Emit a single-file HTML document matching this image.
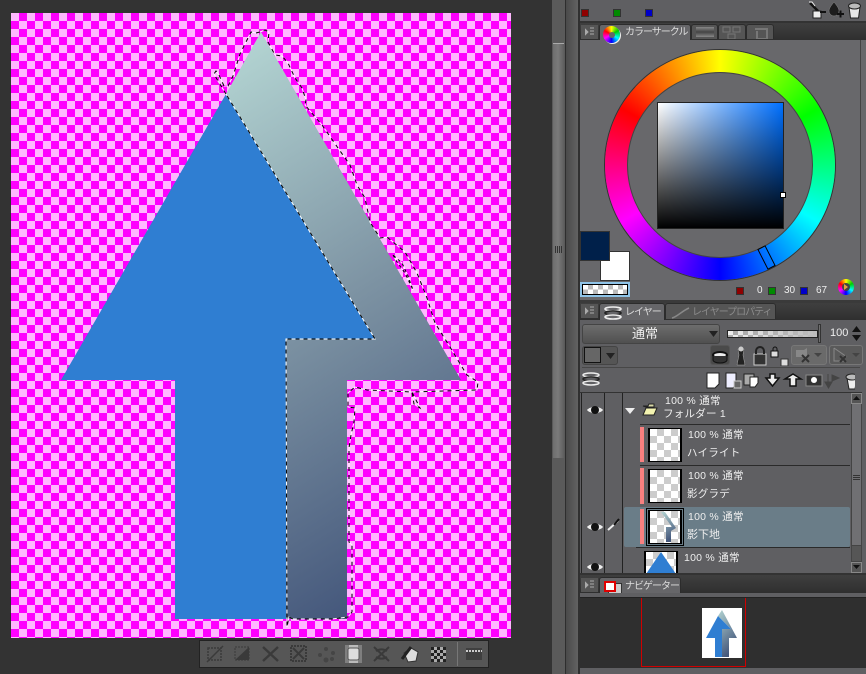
<!DOCTYPE html>
<html><head><meta charset="utf-8"><style>
*{box-sizing:border-box}
html,body{margin:0;padding:0;width:866px;height:674px;overflow:hidden;background:#333}
body{position:relative;font-family:"Liberation Sans","Noto Sans CJK JP",sans-serif;color:#eee}
.a{position:absolute}
.t{position:absolute;font-size:11px;line-height:13px;white-space:nowrap;color:#eee}
.l{font-size:10.500px;letter-spacing:.25px}
.h{font-size:10px;letter-spacing:-1px;color:#ddd}
.tab{position:absolute;background:#666669;border:1px solid #2c2c2c;border-bottom:0;border-radius:3px 3px 0 0}
.thumb{position:absolute;border:1px solid #000;background-color:#fff;background-image:conic-gradient(#ccc 25%,#fff 0 50%,#ccc 0 75%,#fff 0);background-size:14px 14px}
</style></head><body>

<!-- canvas -->
<div class="a" style="left:11px;top:13px;width:500px;height:625px;background-color:#ff00ff;background-image:conic-gradient(#ffb8ff 25%,#ff00ff 0 50%,#ffb8ff 0 75%,#ff00ff 0);background-size:16px 16px;background-position:8px 0"></div>

<svg class="a" style="left:0;top:0" width="552" height="674">
<defs><linearGradient id="g" gradientUnits="userSpaceOnUse" x1="261" y1="32" x2="544" y2="494">
<stop offset="0" stop-color="#b3d4d2"/><stop offset=".5" stop-color="#7d93a3"/><stop offset="1" stop-color="#45587c"/></linearGradient></defs>
<polygon points="261,32 226,94 375,339 286,339 286,619 347,619 347,380 461,380" fill="url(#g)"/>
<polygon points="226,94 61,380 175,380 175,619 286,619 286,339 375,339" fill="#2f7ed2"/>
<g fill="none" stroke-width="1">
<path stroke="#fff" d="M226,94 L218,81 L214,74 L216,71 L219,75 L224,86 L228,86 L233,76 L240,54 L246,42 L251,32 L256,33 L260,32 L265,30 L269,32 L268,42 L275,55 L282,56 L288,63 L295,78 L302,88 L306,100 L305,105 L322,125 L338,148 L350,165 L357,185 L365,198 L370,222 L380,238 L387,237 L405,252 L417,273 L427,298 L435,323 L450,347 L462,367 L467,375 L478,382 L477,390 L412,392 L420,408 L414,404 L412,392 L367,390 L355,387 L348,393 L348,407 L355,408 L354,422 L351,435 L349,448 L349,542 L352,545 L352,612 L348,617 L332,619 L293,619 L289,617 L287,627 L286,339 L375,339 Z"/>
<path stroke="#000" stroke-dasharray="4 4" d="M226,94 L218,81 L214,74 L216,71 L219,75 L224,86 L228,86 L233,76 L240,54 L246,42 L251,32 L256,33 L260,32 L265,30 L269,32 L268,42 L275,55 L282,56 L288,63 L295,78 L302,88 L306,100 L305,105 L322,125 L338,148 L350,165 L357,185 L365,198 L370,222 L380,238 L387,237 L405,252 L417,273 L427,298 L435,323 L450,347 L462,367 L467,375 L478,382 L477,390 L412,392 L420,408 L414,404 L412,392 L367,390 L355,387 L348,393 L348,407 L355,408 L354,422 L351,435 L349,448 L349,542 L352,545 L352,612 L348,617 L332,619 L293,619 L289,617 L287,627 L286,339 L375,339 Z"/>
<path stroke="#fff" d="M393,255 L397,262 L405,273 L413,290 L408,276 L402,263 Z"/>
<path stroke="#000" stroke-dasharray="3 3" d="M393,255 L397,262 L405,273 L413,290 L408,276 L402,263 Z"/>
</g>
</svg>

<!-- canvas toolbar -->
<div class="a" style="left:199px;top:640px;width:290px;height:28px;background:#565656;border:1px solid #222"></div>
<svg class="a" style="left:199px;top:640px" width="290" height="28">
<rect x="146" y="5" width="17" height="18" fill="#7f7f7f"/>
<rect x="150" y="5" width="9" height="18" fill="#bbb"/>
<rect x="149" y="8" width="11" height="12" rx="2" fill="#ddd" stroke="#555"/>
<g fill="none" stroke="#3a3a3a" stroke-width="1.500">
<rect x="9" y="8" width="13" height="12" stroke-dasharray="2 1"/><path d="M8,22 L24,6"/>
<rect x="36" y="7" width="14" height="13" stroke-dasharray="2 1" stroke-width="1"/>
<path d="M64,7 L79,21 M79,7 L64,21" stroke-width="2.400"/>
<rect x="92" y="6" width="15" height="15" stroke-width="2" stroke-dasharray="2 1"/><path d="M94,8 L105,19 M105,8 L94,19" stroke-width="2"/>
<path d="M175,7 L190,21 M190,7 L175,21 M177,11 a10,10 0 0 1 11,0 M177,17 a10,10 0 0 0 11,0" stroke-width="2"/>
</g>
<polygon points="36,20 50,7 50,20" fill="#3a3a3a"/>
<g fill="#454545"><circle cx="121" cy="15" r="2"/><circle cx="127" cy="9" r="2"/><circle cx="134" cy="13" r="2"/><circle cx="127" cy="20" r="2.500"/><circle cx="133" cy="19" r="2"/></g>
<path d="M205,13 l7,-5 l7,4 l-2,9 l-8,1 z" fill="#ddd" stroke="#333"/><path d="M203,19 l9,-12" stroke="#222" stroke-width="3"/>
<rect x="232" y="7" width="15" height="15" fill="#aaa"/>
<g fill="#222"><rect x="232" y="7" width="3" height="3"/><rect x="238" y="7" width="3" height="3"/><rect x="244" y="7" width="3" height="3"/><rect x="235" y="10" width="3" height="3"/><rect x="241" y="10" width="3" height="3"/><rect x="232" y="13" width="3" height="3"/><rect x="238" y="13" width="3" height="3"/><rect x="244" y="13" width="3" height="3"/><rect x="235" y="16" width="3" height="3"/><rect x="241" y="16" width="3" height="3"/><rect x="232" y="19" width="3" height="3"/><rect x="238" y="19" width="3" height="3"/><rect x="244" y="19" width="3" height="3"/></g>
<rect x="258" y="2" width="1" height="24" fill="#777"/>
<rect x="267" y="8" width="16" height="12" fill="#3f3f3f"/><path d="M267,11 h16" stroke="#ccc" stroke-width="2" stroke-dasharray="2 1"/>
</svg>

<!-- splitter and right panel -->
<div class="a" style="left:552px;top:0;width:314px;height:674px;background:#5f5f62"></div>
<div class="a" style="left:552px;top:0;width:13px;height:674px;background:#5a5a5a"></div>
<div class="a" style="left:565px;top:0;width:1px;height:674px;background:#2e2e2e"></div>
<div class="a" style="left:566px;top:0;width:12px;height:674px;background:linear-gradient(90deg,#4a4a4a,#626262)"></div>
<div class="a" style="left:578px;top:0;width:2px;height:674px;background:#303030"></div>
<div class="a" style="left:553px;top:43px;width:11px;height:415px;background:linear-gradient(90deg,#6e6e6e,#7a7a7a 45%,#5e5e5e);border-top:1px solid #aaa"></div>
<div class="a" style="left:555px;top:246px;width:7px;height:7px;background:repeating-linear-gradient(90deg,#333 0 1px,transparent 1px 2px)"></div>

<div class="a" style="left:581px;top:9px;width:8px;height:8px;background:#8f0000;border:1px solid #333"></div>
<div class="a" style="left:613px;top:9px;width:8px;height:8px;background:#008a00;border:1px solid #333"></div>
<div class="a" style="left:645px;top:9px;width:8px;height:8px;background:#0000c8;border:1px solid #333"></div>
<svg class="a" style="left:805px;top:0" width="61" height="20">
<path d="M5,3 L13,11" stroke="#111" stroke-width="2.500"/><path d="M4,2 l3,0 l3,4" stroke="#eee" fill="none"/>
<rect x="8" y="11" width="8" height="7" fill="#eee" stroke="#222"/><rect x="15" y="11" width="6" height="2" fill="#111"/>
<path d="M29,2 c-4,5 -5,7 -5,9 a5,5 0 0 0 10,0 c0,-2 -1,-4 -5,-9z" fill="#1c1c1c" stroke="#888" stroke-width=".5"/><path d="M32,14 h7 M35.500,10.500 v7" stroke="#111" stroke-width="2"/>
<path d="M44,7 l1.500,11 h8 l1.500,-11z" fill="#e8e8e8" stroke="#222"/><ellipse cx="49.500" cy="6" rx="6" ry="3" fill="#bbb" stroke="#222"/>
</svg>

<!-- color panel -->
<div class="a" style="left:580px;top:21px;width:286px;height:2px;background:#333"></div>
<div class="a" style="left:580px;top:23px;width:286px;height:17px;background:linear-gradient(#3f3f3f,#2f2f2f)"></div>
<div class="a" style="left:581px;top:25px;width:17px;height:14px;background:#555"></div>
<svg class="a" style="left:585px;top:27px" width="10" height="10"><path d="M0,2 L3,5 L0,8Z M5,1 h4 M5,4 h4 M5,7 h4" fill="#aaa" stroke="#aaa"/></svg>
<div class="tab" style="left:599px;top:24px;width:92px;height:16px"></div>
<div class="tab" style="left:691px;top:24px;width:27px;height:15px;background:#555"></div>
<div class="tab" style="left:718px;top:24px;width:28px;height:15px;background:#555"></div>
<div class="tab" style="left:746px;top:24px;width:28px;height:15px;background:#555"></div>
<div class="a" style="left:580px;top:40px;width:286px;height:260px;background:#68686b"></div>
<div class="a" style="left:603px;top:26px;width:17px;height:17px;border-radius:50%;background:conic-gradient(#ff0,#0c0 60deg,#0ff 120deg,#00f 180deg,#f0f 240deg,#f00 300deg,#ff0);box-shadow:1px 1px 0 #eee"></div>
<div class="a" style="left:609px;top:32px;width:6px;height:6px;border-radius:50%;background:#666"></div>
<div class="t h" style="left:625px;top:26px">カラーサークル</div>
<div class="a" style="left:696px;top:27px;width:18px;height:10px;background:linear-gradient(#888,#444 50%,#888)"></div>
<svg class="a" style="left:722px;top:26px" width="50" height="13" fill="none" stroke="#777"><rect x="1" y="1" width="7" height="5"/><rect x="11" y="1" width="7" height="5"/><rect x="6" y="8" width="7" height="5"/><path d="M33,3 h12 v10 h-10 v-8" stroke-width="2"/></svg>
<div class="a" style="left:860px;top:40px;width:1px;height:260px;background:#444"></div>

<div class="a" style="left:605px;top:50px;width:230px;height:230px;border-radius:50%;background:conic-gradient(#ff0,#0f0 60deg,#0ff 120deg,#00f 180deg,#f0f 240deg,#f00 300deg,#ff0);box-shadow:0 0 0 1px #333"></div>
<div class="a" style="left:628px;top:73px;width:184px;height:184px;border-radius:50%;background:#68686b;box-shadow:0 0 0 1px #444"></div>
<div class="a" style="left:657px;top:102px;width:127px;height:127px;border:1px solid #222;background:linear-gradient(to bottom,transparent,#000),linear-gradient(to right,#fff,#0070ff)"></div>
<div class="a" style="left:780px;top:192px;width:6px;height:6px;border:1px solid #000;background:#fff"></div>
<div class="a" style="left:762px;top:246px;width:9px;height:23px;border:1px solid #000;transform:rotate(-27deg)"></div>

<div class="a" style="left:580px;top:231px;width:30px;height:30px;background:#00204a;border:1px solid #333;z-index:2"></div>
<div class="a" style="left:600px;top:251px;width:30px;height:30px;background:#fff;border:1px solid #333"></div>
<div class="a" style="left:580px;top:282px;width:50px;height:15px;background:#8fc4e8"></div>
<div class="a" style="left:582px;top:284px;width:46px;height:11px;border:1px solid #000;background-color:#fff;background-image:conic-gradient(#bbb 25%,#fff 0 50%,#bbb 0 75%,#fff 0);background-size:10px 9px"></div>

<div class="a" style="left:736px;top:287px;width:8px;height:8px;background:#8f0000;border:1px solid #333"></div>
<div class="a" style="left:768px;top:287px;width:8px;height:8px;background:#008a00;border:1px solid #333"></div>
<div class="a" style="left:800px;top:287px;width:8px;height:8px;background:#0000c8;border:1px solid #333"></div>
<div class="t" style="left:757px;top:284px;font-size:10px;">0</div>
<div class="t" style="left:784px;top:284px;font-size:10px;">30</div>
<div class="t" style="left:816px;top:284px;font-size:10px;">67</div>
<div class="a" style="left:838px;top:279px;width:16px;height:16px;border-radius:50%;background:conic-gradient(#ff0,#0c0 60deg,#0ff 120deg,#00f 180deg,#f0f 240deg,#f00 300deg,#ff0)"></div>
<div class="a" style="left:842px;top:283px;width:8px;height:8px;border-radius:50%;background:#444"></div>
<svg class="a" style="left:843px;top:284px" width="6" height="6"><polygon points="1,0 5,3 1,6" fill="#e8a040"/></svg>

<!-- layer panel -->
<div class="a" style="left:580px;top:300px;width:286px;height:3px;background:#3a3a3a"></div>
<div class="a" style="left:580px;top:303px;width:286px;height:17px;background:linear-gradient(#3f3f3f,#2f2f2f)"></div>
<div class="a" style="left:581px;top:304px;width:17px;height:14px;background:#555"></div>
<svg class="a" style="left:585px;top:306px" width="10" height="10"><path d="M0,2 L3,5 L0,8Z M5,1 h4 M5,4 h4 M5,7 h4" fill="#aaa" stroke="#aaa"/></svg>
<div class="tab" style="left:599px;top:303px;width:66px;height:17px"></div>
<div class="tab" style="left:665px;top:303px;width:111px;height:16px;background:#555"></div>
<svg class="a" style="left:604px;top:306px" width="18" height="15" fill="none" stroke="#eee" stroke-width="1.600"><ellipse cx="9" cy="3" rx="8" ry="2"/><ellipse cx="9" cy="7" rx="8" ry="2" stroke="#222"/><ellipse cx="9" cy="11" rx="8" ry="2"/></svg>
<div class="t h" style="left:625px;top:306px">レイヤー</div>
<svg class="a" style="left:671px;top:307px" width="20" height="12" fill="none" stroke="#888"><path d="M1,11 C6,10 11,4 18,1" stroke-width="1.500"/></svg>
<div class="t h" style="left:692px;top:306px;color:#8b8b8b">レイヤープロパティ</div>
<div class="a" style="left:580px;top:320px;width:286px;height:255px;background:#5f5f62"></div>

<div class="a" style="left:582px;top:324px;width:138px;height:20px;background:linear-gradient(#6d6d6d,#505050);border:1px solid #444;border-radius:3px"></div>
<div class="t" style="left:632px;top:326px;font-size:13px;line-height:15px">通常</div>
<svg class="a" style="left:709px;top:331px" width="9" height="6"><polygon points="0,0 9,0 4.500,6" fill="#222"/></svg>
<div class="a" style="left:727px;top:330px;width:91px;height:8px;background-color:#ddd;background-image:linear-gradient(90deg,transparent,#bdbdbd),conic-gradient(#aaa 25%,#eee 0 50%,#aaa 0 75%,#eee 0);background-size:100% 100%,10px 8px;border:1px solid #222"></div>
<div class="a" style="left:818px;top:324px;width:3px;height:19px;background:#6f6f6f;border:1px solid #333"></div>
<div class="t" style="left:830px;top:327px;font-size:11px">100</div>
<svg class="a" style="left:851px;top:326px" width="11" height="16"><polygon points="5.500,0 10,6 1,6" fill="#111"/><polygon points="1,9 10,9 5.500,15" fill="#111"/></svg>

<div class="a" style="left:582px;top:346px;width:36px;height:19px;background:#555;border:1px solid #444;border-radius:3px"></div>
<div class="a" style="left:584px;top:347px;width:17px;height:16px;background:#666;border:1px solid #111"></div>
<svg class="a" style="left:606px;top:353px" width="9" height="6"><polygon points="0,0 9,0 4.500,6" fill="#222"/></svg>

<div class="a" style="left:710px;top:345px;width:20px;height:20px;background:#4a4a4a;border-radius:3px;border:1px solid #555"></div>
<svg class="a" style="left:710px;top:344px" width="156" height="22">
<ellipse cx="10" cy="11" rx="7" ry="3" fill="#eee" stroke="#111" stroke-width="2"/><path d="M3,12 v4 a7,3 0 0 0 14,0 v-4" fill="#333" stroke="#111"/>
<path d="M28,5 h6 l-1,6 l2,10 h-8 l2,-10z" fill="#222" stroke="#aaa" stroke-width=".5"/><circle cx="31" cy="5" r="2.500" fill="#ccc"/>
<rect x="44" y="10" width="12" height="11" fill="#333" stroke="#ccc"/><path d="M46,10 v-3 a4,4 0 0 1 8,0 v3" fill="none" stroke="#222" stroke-width="2"/>
<rect x="61" y="7" width="7" height="6" fill="#ddd" stroke="#111"/><path d="M63,7 v-2 a2,2 0 0 1 4,0 v2" fill="none" stroke="#111"/><rect x="71" y="15" width="7" height="7" fill="#ddd" stroke="#333"/>
</svg>
<div class="a" style="left:791px;top:345px;width:36px;height:20px;background:#6a6a6a;border:1px solid #777;border-radius:3px"></div>
<div class="a" style="left:829px;top:345px;width:34px;height:20px;background:#5a5a5a;border:1px solid #777;border-radius:3px"></div>
<svg class="a" style="left:791px;top:345px" width="72" height="20"><path d="M5,5 h8 l3,-2 v9 h-11z" fill="#888"/><path d="M11,10 l7,7 M18,10 l-7,7" stroke="#333" stroke-width="2"/><polygon points="23,8 31,8 27,12" fill="#444"/><path d="M43,3 l13,9 M43,3 v13 h10" stroke="#888" fill="none"/><path d="M49,11 l6,6 M55,11 l-6,6" stroke="#333" stroke-width="2"/><polygon points="61,8 69,8 65,12" fill="#444"/></svg>

<div class="a" style="left:582px;top:367px;width:278px;height:1px;background:#474747"></div>
<svg class="a" style="left:581px;top:372px" width="20" height="16" fill="none" stroke="#eee" stroke-width="1.500"><ellipse cx="10" cy="3" rx="8" ry="2"/><ellipse cx="10" cy="7" rx="8" ry="2" stroke="#222"/><ellipse cx="10" cy="11" rx="8" ry="2"/></svg>
<svg class="a" style="left:705px;top:372px" width="150" height="18">
<path d="M2,1 h12 v11 l-4,4 h-8z" fill="#fff" stroke="#222"/>
<path d="M21,1 h10 v11 l-3,4 h-7z" fill="#eef" stroke="#222"/><rect x="29" y="9" width="7" height="7" fill="#666" stroke="#ccc"/>
<rect x="39" y="2" width="10" height="11" fill="#aaa" stroke="#222"/><path d="M45,5 h8 v6 l-3,4 h-5z" fill="#fff" stroke="#222"/>
<path d="M65,2 h5 v4 h4 l-6.500,8 l-6.500,-8 h4z" fill="#eee" stroke="#111" stroke-width="1.500"/>
<path d="M88,2 l8,5 h-5 v7 h-6 v-7 h-5z" fill="#eee" stroke="#111" stroke-width="1.500"/>
<rect x="101" y="3" width="16" height="11" fill="#333" stroke="#888"/><circle cx="109" cy="8" r="3" fill="#fff"/>
<path d="M120,10 h7 l-3.500,6z M123,2 v8 M127,3 l7,3 l-7,3z" fill="#444" stroke="#444"/>
<path d="M142,6 l2,11 h6 l2,-11z" fill="#eee" stroke="#222"/><ellipse cx="147" cy="5" rx="6" ry="3" fill="#bbb" stroke="#222"/>
</svg>

<!-- layer list -->
<div class="a" style="left:580px;top:392px;width:282px;height:1px;background:#333"></div>
<div class="a" style="left:581px;top:393px;width:1px;height:182px;background:#222"></div>
<div class="a" style="left:604px;top:393px;width:1px;height:182px;background:#222"></div>
<div class="a" style="left:622px;top:393px;width:1px;height:182px;background:#222"></div>
<div class="a" style="left:640px;top:424px;width:210px;height:1px;background:#2a2a2a"></div>
<div class="a" style="left:640px;top:465px;width:210px;height:1px;background:#2a2a2a"></div>
<div class="a" style="left:636px;top:547px;width:214px;height:1px;background:#2a2a2a"></div>

<div class="a" style="left:624px;top:507px;width:226px;height:40px;background:#6a7d88;border-radius:2px"></div>

<svg class="a" style="left:584px;top:395px" width="60" height="185">
<path d="M3,15 c3,-4 13,-4 16,0 c-3,4 -13,4 -16,0z" fill="#eee"/><circle cx="11" cy="15" r="4" fill="#111"/>
<path d="M3,132 c3,-4 13,-4 16,0 c-3,4 -13,4 -16,0z" fill="#eee"/><circle cx="11" cy="132" r="4" fill="#111"/>
<path d="M3,172 c3,-4 13,-4 16,0 c-3,4 -13,4 -16,0z" fill="#eee"/><circle cx="11" cy="172" r="4" fill="#111"/>
<path d="M24,135 l10,-9" stroke="#eee" stroke-width="2"/><path d="M30,130 l5,-6" stroke="#111" stroke-width="2"/>
<polygon points="41,13 51,13 46,19" fill="#eee"/>
</svg>
<svg class="a" style="left:642px;top:403px" width="16" height="13"><path d="M1,3 h5 l1,-2 h5 v3 h-8z" fill="#d8d8a8" stroke="#222"/><path d="M1,12 l3,-7 h11 l-3,7z" fill="#f3f3b0" stroke="#222"/></svg>

<div class="t l" style="left:665px;top:395px">100 % 通常</div>
<div class="t l" style="left:663px;top:408px">フォルダー 1</div>

<div class="a" style="left:640px;top:427px;width:4px;height:35px;background:#f88080"></div>
<div class="thumb" style="left:648px;top:428px;width:34px;height:34px;border-width:1px 2px"></div>
<div class="t l" style="left:688px;top:429px">100 % 通常</div>
<div class="t l" style="left:687px;top:447px">ハイライト</div>

<div class="a" style="left:640px;top:468px;width:4px;height:36px;background:#f88080"></div>
<div class="thumb" style="left:648px;top:469px;width:34px;height:34px;border-width:1px 2px"></div>
<div class="t l" style="left:688px;top:470px">100 % 通常</div>
<div class="t l" style="left:687px;top:488px">影グラデ</div>

<div class="a" style="left:640px;top:509px;width:4px;height:35px;background:#f88080"></div>
<div class="a" style="left:646px;top:508px;width:38px;height:38px;border:1px solid #000"></div>
<div class="thumb" style="left:648px;top:510px;width:34px;height:34px;border-width:1px 2px"></div>
<svg class="a" style="left:650px;top:511px" width="30" height="32">
<defs><linearGradient id="g2" x1="0" y1="0" x2="0.300" y2="1"><stop offset="0" stop-color="#b3d4d2"/><stop offset="1" stop-color="#45587c"/></linearGradient></defs>
<polygon points="11,1 15,1 26,17 21,20 21,31 16,31 16,16 22,16" fill="url(#g2)"/></svg>
<div class="t l" style="left:688px;top:511px">100 % 通常</div>
<div class="t" style="left:687px;top:529px;font-size:11px">影下地</div>

<div class="thumb" style="left:644px;top:551px;width:34px;height:23px;border-width:1px 2px 0"></div>
<svg class="a" style="left:646px;top:552px" width="30" height="22"><polygon points="15,0 0,22 30,22" fill="#2f7ed2"/></svg>
<div class="t l" style="left:684px;top:552px">100 % 通常</div>

<!-- scrollbar -->
<div class="a" style="left:851px;top:393px;width:11px;height:182px;background:#707073;border:1px solid #444"></div>
<div class="a" style="left:851px;top:393px;width:11px;height:11px;background:#555;border:1px solid #888"></div>
<svg class="a" style="left:853px;top:396px" width="7" height="5"><polygon points="3.500,0 7,4 0,4" fill="#111"/></svg>
<div class="a" style="left:851px;top:545px;width:11px;height:17px;background:#565656;border:1px solid #444"></div>
<div class="a" style="left:851px;top:562px;width:11px;height:11px;background:#555;border:1px solid #888"></div>
<svg class="a" style="left:853px;top:565px" width="7" height="5"><polygon points="0,0 7,0 3.500,4" fill="#111"/></svg>
<div class="a" style="left:853px;top:475px;width:7px;height:5px;background:repeating-linear-gradient(#333 0 1px,transparent 1px 2px)"></div>

<!-- navigator -->
<div class="a" style="left:580px;top:573px;width:286px;height:2px;background:#333"></div>
<div class="a" style="left:580px;top:575px;width:286px;height:18px;background:linear-gradient(#3f3f3f,#2f2f2f)"></div>
<div class="a" style="left:581px;top:578px;width:17px;height:14px;background:#555"></div>
<svg class="a" style="left:585px;top:580px" width="10" height="10"><path d="M0,2 L3,5 L0,8Z M5,1 h4 M5,4 h4 M5,7 h4" fill="#aaa" stroke="#aaa"/></svg>
<div class="tab" style="left:599px;top:577px;width:82px;height:16px"></div>
<div class="a" style="left:608px;top:583px;width:14px;height:12px;background:#ccc;border:1px solid #333"></div>
<div class="a" style="left:604px;top:581px;width:12px;height:11px;background:#fff;border:2px solid #e00000"></div>
<div class="t h" style="left:625px;top:580px">ナビゲーター</div>
<div class="a" style="left:580px;top:593px;width:286px;height:81px;background:#5f5f62"></div>
<div class="a" style="left:580px;top:597px;width:286px;height:71px;background:#2f2f2f;border-top:1px solid #222"></div>
<div class="a" style="left:641px;top:598px;width:105px;height:69px;border:1px solid #d00000;border-top:0"></div>
<div class="a" style="left:702px;top:608px;width:40px;height:50px;background:#fff"></div>
<svg class="a" style="left:702px;top:608px" width="40" height="50">
<defs><linearGradient id="g3" x1="0" y1="0" x2="0.400" y2="1"><stop offset="0" stop-color="#b3d4d2"/><stop offset="1" stop-color="#45587c"/></linearGradient></defs>
<polygon points="20,2 16,8 29,21 20,21 20,49 27,49 27,30 35,30" fill="url(#g3)"/>
<polygon points="16,8 4,30 13,30 13,49 20,49 20,21 29,21" fill="#2f7ed2"/>
</svg>
</body></html>
